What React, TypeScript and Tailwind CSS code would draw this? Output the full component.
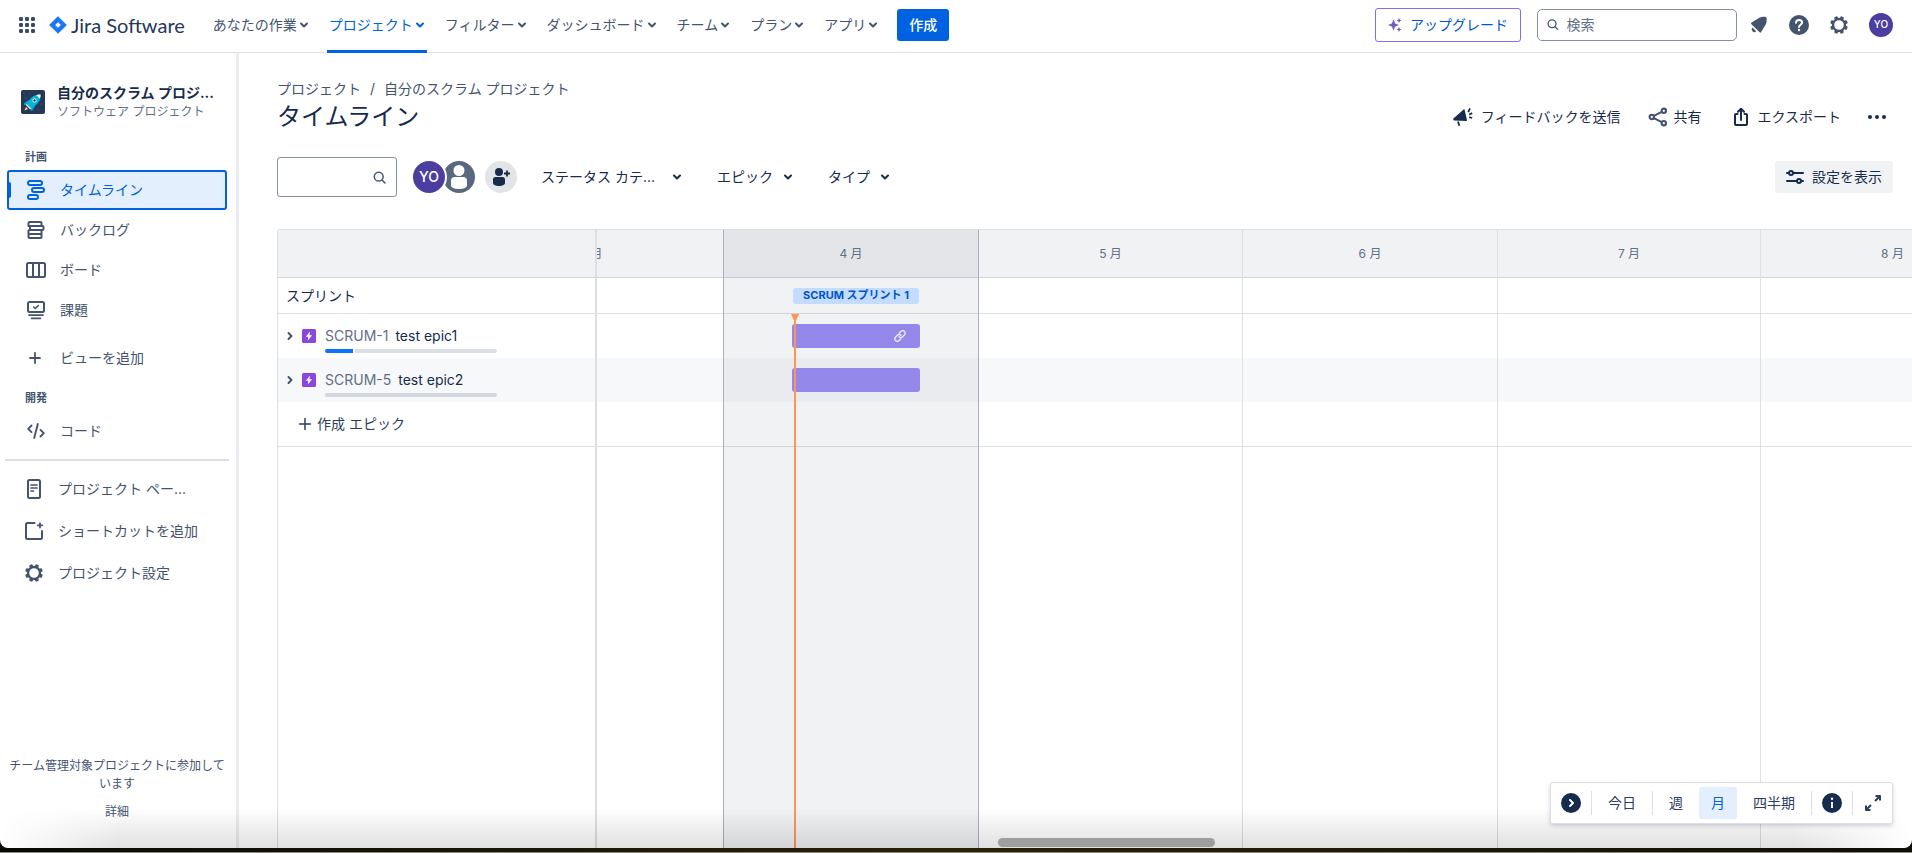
import type { ReactNode } from "react";

type IconProps = { className?: string };

function Chevron({ className = "" }: IconProps) {
  return (
    <svg className={className} width="10" height="10" viewBox="0 0 10 10" fill="none" stroke="currentColor" strokeWidth="2" strokeLinecap="round" strokeLinejoin="round" aria-hidden="true">
      <path d="M2 3.500 5 6.500 8 3.500" />
    </svg>
  );
}

function GridIcon() {
  return (
    <svg width="16" height="16" viewBox="0 0 16 16" fill="currentColor" aria-hidden="true">
      {[0, 6, 12].map((y) => [0, 6, 12].map((x) => <rect key={`${x}-${y}`} x={x} y={y} width="4" height="4" rx="1.300" />))}
    </svg>
  );
}

function JiraMark() {
  return (
    <svg width="18" height="18" viewBox="0 0 18 18" aria-hidden="true">
      <path d="M9 .3 17.400 8.400a.8.8 0 0 1 0 1.200L9 17.700.6 9.600a.8.8 0 0 1 0-1.200z" fill="#1D7AFC" />
      <path d="M9 .3v5.900L6.300 9H.4z" fill="#0C66E4" opacity=".2" />
      <path d="M9 17.700v-5.900L11.700 9h5.900z" fill="#0C66E4" opacity=".2" />
      <path d="M9 6.200 11.800 9 9 11.800 6.200 9z" fill="#fff" />
    </svg>
  );
}

function SearchIcon({ className = "" }: IconProps) {
  return (
    <svg className={className} width="13" height="13" viewBox="0 0 13 13" fill="none" stroke="currentColor" strokeWidth="1.500" strokeLinecap="round" aria-hidden="true">
      <circle cx="5.700" cy="5.700" r="4.400" />
      <path d="m9 9 3 3" />
    </svg>
  );
}

function SparkleIcon() {
  return (
    <svg width="14" height="14" viewBox="0 0 14 14" fill="currentColor" aria-hidden="true">
      <path d="M5.500 1.500 7.100 5.400 11 7 7.100 8.600 5.500 12.500 3.900 8.600 0 7l3.900-1.600z" />
      <path d="M11 0l.8 1.700 1.700.8-1.700.8L11 5l-.8-1.700-1.700-.8 1.700-.8zM11 9l.8 1.700 1.700.8-1.700.8L11 14l-.8-1.700-1.700-.8 1.700-.8z" />
    </svg>
  );
}

function BellIcon() {
  return (
    <svg width="18" height="18" viewBox="0 0 18 18" fill="currentColor" aria-hidden="true">
      <path d="M9.400 1.700c2-1 4.900-1 6.300-.6.600.2.800.5.900 1 .3 1.800.1 4.500-1 6.600l-4.500 7.400c-.4.700-1 .7-1.500.2L1.400 8.200c-.6-.6-.5-1.200.2-1.600z" />
      <path d="M2.500 11.600a2.600 2.600 0 0 0 3.700 3.700z" />
    </svg>
  );
}

function HelpIcon() {
  return (
    <svg width="20" height="20" viewBox="0 0 20 20" aria-hidden="true">
      <circle cx="10" cy="10" r="10" fill="currentColor" />
      <path d="M7 7.800C7 6 8.200 4.900 10 4.900s3.100 1.100 3.100 2.700c0 2-3.100 2.200-3.100 4.400" fill="none" stroke="#fff" strokeWidth="2" strokeLinecap="round" />
      <circle cx="10" cy="15" r="1.200" fill="#fff" />
    </svg>
  );
}

function GearIcon() {
  return (
    <svg width="18" height="18" viewBox="0 0 18 18" aria-hidden="true">
      <circle cx="9" cy="9" r="6" fill="none" stroke="currentColor" strokeWidth="2.400" />
      {[22.5, 67.5, 112.5, 157.5, 202.5, 247.5, 292.5, 337.5].map((a) => (
        <rect key={a} x="7.200" y="0.100" width="3.600" height="3" rx="1" fill="currentColor" transform={`rotate(${a} 9 9)`} />
      ))}
    </svg>
  );
}

function MegaphoneIcon() {
  return (
    <svg width="20" height="20" viewBox="0 0 20 20" aria-hidden="true">
      <path d="M11.600 2.800 14 13.200c.1.400-.2.700-.6.700L1.600 13.600c-1.300 0-1.900-1.500-.9-2.400L10.600 2.600c.4-.4.900-.3 1 .2z" fill="currentColor" />
      <path d="M5 14.500 6.300 18.800M15.200 5.200 17 1.300M16.200 7.600l3-1.600M16.200 10.200l3 .8" fill="none" stroke="currentColor" strokeWidth="1.800" />
    </svg>
  );
}

function ShareIcon() {
  return (
    <svg width="20" height="20" viewBox="0 0 20 20" fill="none" stroke="currentColor" strokeWidth="2.100" aria-hidden="true">
      <circle cx="3.800" cy="10" r="2.200" />
      <circle cx="15.800" cy="3.800" r="2.200" />
      <circle cx="15.800" cy="16.200" r="2.200" />
      <path d="m5.900 8.900 7.800-4M5.900 11.100l7.800 4" />
    </svg>
  );
}

function ExportIcon() {
  return (
    <svg width="16" height="20" viewBox="0 0 16 20" fill="none" stroke="currentColor" strokeWidth="2" strokeLinecap="round" strokeLinejoin="round" aria-hidden="true">
      <path d="M4.500 7H3a1 1 0 0 0-1 1v9a1 1 0 0 0 1 1h10a1 1 0 0 0 1-1V8a1 1 0 0 0-1-1h-1.500" />
      <path d="M8 13V2.200M5 4.800l3-3 3 3" />
    </svg>
  );
}

function SlidersIcon() {
  return (
    <svg width="18" height="14" viewBox="0 0 18 14" fill="none" stroke="currentColor" strokeWidth="2" strokeLinecap="round" aria-hidden="true">
      <path d="M1 3h2M7.500 3H17M1 11h9.500M15.500 11H17" />
      <circle cx="5" cy="3" r="2" />
      <circle cx="13" cy="11" r="2" />
    </svg>
  );
}

function TimelineIcon() {
  return (
    <svg width="20" height="20" viewBox="0 0 20 20" fill="none" stroke="currentColor" strokeWidth="2" aria-hidden="true">
      <rect x="2" y="1" width="14" height="4" rx="2" />
      <rect x="6" y="8" width="12" height="4" rx="2" />
      <rect x="2" y="15" width="10" height="4" rx="2" />
    </svg>
  );
}

function BacklogIcon() {
  return (
    <svg width="20" height="20" viewBox="0 0 20 20" fill="none" stroke="currentColor" strokeWidth="2" strokeLinejoin="round" aria-hidden="true">
      <path d="M3.500 2h11a1 1 0 0 1 1 1v3h-13V3a1 1 0 0 1 1-1z" />
      <path d="M4 6h12.500a1 1 0 0 1 1 1v2a1 1 0 0 1-1 1H4" />
      <path d="M2.500 10h13M2.500 14h13M2.500 10v7a1 1 0 0 0 1 1h11a1 1 0 0 0 1-1v-7M4 6v4" />
    </svg>
  );
}

function BoardIcon() {
  return (
    <svg width="20" height="20" viewBox="0 0 20 20" fill="none" stroke="currentColor" strokeWidth="2" aria-hidden="true">
      <rect x="1" y="3" width="18" height="14" rx="1.500" />
      <path d="M7 3v14M13 3v14" />
    </svg>
  );
}

function IssuesIcon() {
  return (
    <svg width="20" height="20" viewBox="0 0 20 20" fill="none" stroke="currentColor" strokeWidth="2" strokeLinecap="round" strokeLinejoin="round" aria-hidden="true">
      <rect x="2" y="2" width="16" height="10" rx="1.500" />
      <path d="m7.600 7 1.700 1.500 3-3" strokeWidth="1.600" />
      <path d="M3 15.200h14M5.500 18.300h9" strokeWidth="1.700" />
    </svg>
  );
}

function PlusIcon() {
  return (
    <svg width="20" height="20" viewBox="0 0 20 20" fill="none" stroke="currentColor" strokeWidth="1.800" strokeLinecap="round" aria-hidden="true">
      <path d="M9 5v10M4 10h10" />
    </svg>
  );
}

function CodeIcon() {
  return (
    <svg width="20" height="20" viewBox="0 0 20 20" fill="none" stroke="currentColor" strokeWidth="1.900" strokeLinecap="round" strokeLinejoin="round" aria-hidden="true">
      <path d="M5.500 4.500 2.200 7.800l3.300 3.300M11.800 3 8.200 17M14.500 8.900l3.300 3.300-3.300 3.300" />
    </svg>
  );
}

function PageIcon() {
  return (
    <svg width="20" height="20" viewBox="0 0 20 20" fill="none" stroke="currentColor" strokeWidth="2" strokeLinecap="round" aria-hidden="true">
      <rect x="4" y="1" width="12" height="18" rx="1.500" />
      <path d="M7 6h6M7 9h6M7 12h2.500" strokeWidth="1.700" />
    </svg>
  );
}

function ShortcutIcon() {
  return (
    <svg width="20" height="20" viewBox="0 0 20 20" fill="none" stroke="currentColor" strokeWidth="2" strokeLinecap="round" aria-hidden="true">
      <path d="M10.500 2H3.500A1.500 1.500 0 0 0 2 3.500v13A1.500 1.500 0 0 0 3.500 18h13a1.500 1.500 0 0 0 1.500-1.500v-6.500" />
      <path d="M16 2v4.600M13.700 4.300h4.600" strokeWidth="1.700" />
    </svg>
  );
}

function RocketAvatar() {
  return (
    <svg className="shrink-0" width="24" height="24" viewBox="0 0 24 24" aria-hidden="true">
      <rect width="24" height="24" rx="2" fill="#253858" />
      <g fill="#42526E">
        <circle cx="4" cy="8" r=".8" />
        <circle cx="9" cy="4" r=".8" />
        <circle cx="20" cy="14" r=".8" />
        <circle cx="17" cy="20" r=".8" />
        <circle cx="3" cy="3.500" r=".8" />
      </g>
      <path d="M8.500 9.500 3.200 13l-.5 2.300 3.500-.5zM14.500 15.500 12 20l-2.200 1.300.2-3.800z" fill="#00A3BF" />
      <path d="M19.500 4.500c.3 3.500-1 7-3.500 9.500l-5.500 4.500-4.800-4.800L10 8c2.500-2.600 6-3.900 9.500-3.500z" fill="#00B8D9" />
      <path d="M19.500 4.500c.1 1.500-.1 3-.6 4.200l-3.600-3.600c1.200-.5 2.700-.7 4.200-.6z" fill="#fff" />
      <path d="m5.700 13.700 4.800 4.800-1.400.9-4.300-4.300z" fill="#DFE1E6" />
      <path d="m5 17-1.500 3.500L7 19z" fill="#FFE380" />
      <circle cx="13.500" cy="10.500" r="1.700" fill="#253858" stroke="#fff" strokeWidth="1" />
    </svg>
  );
}

function EpicIcon() {
  return (
    <svg width="14" height="14" viewBox="0 0 14 14" aria-hidden="true">
      <rect width="14" height="14" rx="1.500" fill="#8B46DB" />
      <path d="M8 2.600 3.800 7.700h2.500l-.5 3.700 4.300-5.100H7.500z" fill="#fff" />
    </svg>
  );
}

const navItems = ["あなたの作業", "プロジェクト", "フィルター", "ダッシュボード", "チーム", "プラン", "アプリ"];

function Header() {
  return (
    <header className="flex h-[53px] shrink-0 items-center border-b border-[#DCDFE4] bg-white pr-[19px] pl-[19px] text-[#44546F]">
      <button aria-label="アプリスイッチャー" className="mb-[3px] text-[#3B4A66]"><GridIcon /></button>
      <a href="#" className="mb-[3px] ml-[14px] flex items-center gap-1 text-[#253858]">
        <JiraMark />
        <span className="font-['Lato','Inter',sans-serif] text-xl leading-6 whitespace-nowrap">Jira Software</span>
      </a>
      <nav className="ml-[18px] flex h-[53px] items-stretch" aria-label="メイン">
        {navItems.map((label, i) => (
          <button
            key={label}
            className={
              i === 1
                ? "mx-2 flex items-center gap-[2px] border-b-3 border-[#0062E0] px-[2px] whitespace-nowrap text-[#0062E0]"
                : "mx-2 flex items-center gap-[2px] px-[2px] pb-[3px] whitespace-nowrap"
            }
          >
            {label}
            <Chevron />
          </button>
        ))}
      </nav>
      <button className="mb-[3px] ml-[9px] h-8 rounded-[3px] bg-[#0062E0] px-3 font-medium whitespace-nowrap text-white">作成</button>
      <div className="mb-[3px] ml-auto flex items-center">
        <button className="flex h-[34px] items-center gap-2 rounded-[3px] border border-[#8270DB] px-3 whitespace-nowrap text-[#0055CC]">
          <span className="text-[#6E5DC6]"><SparkleIcon /></span>
          アップグレード
        </button>
        <label className="ml-4 flex h-8 w-[200px] items-center gap-2 rounded-[5px] border border-[#8590A2] px-[9px]">
          <SearchIcon />
          <input aria-label="検索" placeholder="検索" className="w-full min-w-0 bg-transparent outline-none placeholder:text-[#626F86]" />
        </label>
        <button aria-label="通知" className="ml-[13px]"><BellIcon /></button>
        <button aria-label="ヘルプ" className="ml-[21px]"><HelpIcon /></button>
        <button aria-label="設定" className="ml-[21px]"><GearIcon /></button>
        <button aria-label="プロフィール" className="ml-[21px] flex size-6 items-center justify-center rounded-full bg-[#4B3EA0] text-[10px] font-medium text-white">YO</button>
      </div>
    </header>
  );
}

function SideLink({ icon, label, tall = false }: { icon: ReactNode; label: string; tall?: boolean }) {
  return (
    <a href="#" className={tall ? "flex h-[42px] items-center gap-[14px] pl-[17px]" : "flex h-10 items-center gap-[14px] pl-[19px]"}>
      <span className="flex size-5 shrink-0 items-center justify-center">{icon}</span>
      <span className="truncate">{label}</span>
    </a>
  );
}

function Sidebar() {
  return (
    <aside className="flex w-[239px] shrink-0 flex-col border-r-3 border-[#EBECF0] pr-[9px] pl-[7px] text-[#44546F]">
      <div className="mt-[30px] flex items-center gap-3 pl-[14px]">
        <RocketAvatar />
        <div className="min-w-0">
          <div className="text-sm leading-5 font-bold whitespace-nowrap text-[#172B4D]">自分のスクラム プロジ...</div>
          <div className="text-xs leading-[18px] whitespace-nowrap text-[#626F86]">ソフトウェア プロジェクト</div>
        </div>
      </div>
      <h2 className="mt-7 pl-[18px] text-[11px] leading-4 font-bold">計画</h2>
      <nav className="mt-[5px]" aria-label="計画">
        <a href="#" aria-current="page" className="flex h-10 items-center rounded-[3px] border-2 border-[#0062E0] bg-[#E4EFFD] text-[#0062E0]">
          <span className="h-4 w-[2px] rounded-r-sm bg-[#0062E0]" />
          <span className="ml-[15px] flex size-5 items-center justify-center"><TimelineIcon /></span>
          <span className="ml-[14px]">タイムライン</span>
        </a>
        <SideLink icon={<BacklogIcon />} label="バックログ" />
        <SideLink icon={<BoardIcon />} label="ボード" />
        <SideLink icon={<IssuesIcon />} label="課題" />
        <div className="mt-2"><SideLink icon={<PlusIcon />} label="ビューを追加" /></div>
      </nav>
      <h2 className="mt-3 pl-[18px] text-[11px] leading-4 font-bold">開発</h2>
      <nav className="mt-[5px]" aria-label="開発"><SideLink icon={<CodeIcon />} label="コード" /></nav>
      <hr className="mt-2 -mr-[2px] -ml-[2px] border-t-2 border-[#DCDFE4]" />
      <nav className="mt-[7px]" aria-label="プロジェクト">
        <SideLink tall icon={<PageIcon />} label="プロジェクト ペー..." />
        <SideLink tall icon={<ShortcutIcon />} label="ショートカットを追加" />
        <SideLink tall icon={<GearIcon />} label="プロジェクト設定" />
      </nav>
      <div className="mt-auto pb-[27px] text-center text-xs leading-[18px]">
        <p>チーム管理対象プロジェクトに参加しています</p>
        <a href="#" className="mt-2.5 block">詳細</a>
      </div>
    </aside>
  );
}

function Toolbar() {
  return (
    <div className="mt-6 mr-[19px] flex items-center text-[#172B4D]">
      <label className="flex h-10 w-[120px] items-center rounded-[3px] border border-[#8590A2] px-[10px] text-[#44546F]">
        <input aria-label="タイムラインを検索" className="w-full min-w-0 bg-transparent outline-none" />
        <SearchIcon className="shrink-0" />
      </label>
      <div className="ml-[14px] flex">
        <span className="z-10 flex size-9 items-center justify-center rounded-full border-2 border-white bg-[#4B3EA0] text-sm font-medium text-white">YO</span>
        <svg className="mt-[2px] -ml-1" width="32" height="32" viewBox="0 0 32 32" role="img" aria-label="未割り当て">
          <circle cx="16" cy="16" r="16" fill="#596780" />
          <circle cx="16" cy="9.500" r="5.500" fill="#fff" />
          <path d="M8 20a4 4 0 0 1 4-4h8a4 4 0 0 1 4 4v4.500c0 2-3.500 3.500-8 3.500s-8-1.500-8-3.500z" fill="#fff" />
        </svg>
      </div>
      <button aria-label="ユーザーを追加" className="ml-[10px] flex size-8 items-center justify-center rounded-full bg-[#E3E4E8]">
        <svg width="18" height="18" viewBox="0 0 18 18" fill="currentColor" aria-hidden="true">
          <circle cx="7" cy="4" r="4" />
          <path d="M1 11.500A2.500 2.500 0 0 1 3.500 9h7a2.500 2.500 0 0 1 2.500 2.500V15c0 1.600-2.500 3-6 3s-6-1.400-6-3z" />
          <path d="M15 2.500v6M12 5.500h6" stroke="currentColor" strokeWidth="1.800" />
        </svg>
      </button>
      <button className="ml-6 flex items-center gap-[17px] whitespace-nowrap">ステータス カテ...<Chevron /></button>
      <button className="ml-[35px] flex items-center gap-[10px] whitespace-nowrap">エピック<Chevron /></button>
      <button className="ml-[35px] flex items-center gap-[10px] whitespace-nowrap">タイプ<Chevron /></button>
      <button className="ml-auto flex h-8 items-center gap-2 rounded-[3px] bg-[#F1F2F4] px-[11px] whitespace-nowrap"><SlidersIcon />設定を表示</button>
    </div>
  );
}

const months = [
  { label: "3 月", column: "-ml-[138px] w-[264px]" },
  { label: "4 月", column: "w-[255px] border-l border-[#A9B1BD] bg-[#091E42]/6" },
  { label: "5 月", column: "w-[264px] border-l border-[#A9B1BD]" },
  { label: "6 月", column: "w-[255px] border-l border-[#DCDFE4]" },
  { label: "7 月", column: "w-[263px] border-l border-[#DCDFE4]" },
  { label: "8 月", column: "w-[264px] border-l border-[#DCDFE4]" },
];

function EpicRow({ id, name, done, striped = false }: { id: string; name: string; done: boolean; striped?: boolean }) {
  return (
    <div className={striped ? "flex h-11 bg-[#F7F8F9] pt-3 pl-[7px]" : "flex h-11 pt-3 pl-[7px]"}>
      <button aria-label={`${id} を展開`} className="flex h-5 items-center text-[#44546F]"><Chevron className="-rotate-90" /></button>
      <span className="ml-[7px] flex h-5 items-center"><EpicIcon /></span>
      <div className="ml-[9px] w-[172px]">
        <div className="flex gap-[7px] leading-5 whitespace-nowrap">
          <a href="#" className="text-[#626F86]">{id}</a>
          <span className="text-[#172B4D]">{name}</span>
        </div>
        <div className="mt-[3px] flex h-1 gap-[2px]">
          {done && <span className="w-7 rounded-l-full bg-[#0C74FC]" />}
          <span className={done ? "flex-1 rounded-r-full bg-[#DCDFE4]" : "flex-1 rounded-full bg-[#D3D6DC]"} />
        </div>
      </div>
    </div>
  );
}

function Timeline() {
  return (
    <section className="mt-8 flex min-h-0 flex-1 rounded-tl-[3px] border-t border-l border-[#DCDFE4]" aria-label="タイムライン">
      <div className="w-[319px] shrink-0 border-r-2 border-[#DCDFE4]">
        <div className="h-12 border-b border-[#D0D4DB] bg-[#F1F2F4]" />
        <div className="flex h-9 items-center border-b border-[#DCDFE4] pl-2 text-[#172B4D]">スプリント</div>
        <EpicRow id="SCRUM-1" name="test epic1" done />
        <EpicRow id="SCRUM-5" name="test epic2" done={false} striped />
        <button className="flex h-[45px] w-full items-center gap-1 border-b border-[#DCDFE4] pl-[19px] text-[#2C3E5D]">
          <svg width="16" height="16" viewBox="0 0 16 16" fill="none" stroke="currentColor" strokeWidth="1.500" strokeLinecap="round" aria-hidden="true">
            <path d="M8 2.500v11M2.500 8h11" />
          </svg>
          作成 エピック
        </button>
      </div>
      <div className="relative min-w-0 flex-1 overflow-hidden">
        <div className="h-12 border-b border-[#D0D4DB] bg-[#F1F2F4]" />
        <div className="h-9 border-b border-[#DCDFE4]" />
        <div className="h-11" />
        <div className="h-11 bg-[#F7F8F9]" />
        <div className="h-[45px] border-b border-[#DCDFE4]" />
        <div className="absolute inset-0 flex">
          {months.map((m) => (
            <div key={m.label} className={`shrink-0 text-center text-xs leading-[47px] text-[#626F86] ${m.column}`}>{m.label}</div>
          ))}
        </div>
        <span className="absolute top-[58px] left-[196px] flex h-4 w-[126px] items-center justify-center rounded-[3px] bg-[#C4DCFE] text-[11px] font-bold whitespace-nowrap text-[#0055CC]">SCRUM スプリント 1</span>
        <div className="absolute top-[94px] left-[195px] flex h-6 w-32 items-center justify-end rounded-[3px] bg-[#9487EA] pr-[14px] text-white/80">
          <svg width="12" height="12" viewBox="0 0 12 12" fill="none" stroke="currentColor" strokeWidth="1.400" strokeLinecap="round" aria-hidden="true">
            <path d="M5.100 3.300 6.900 1.500a2.400 2.400 0 0 1 3.500 3.500L8.600 6.800a2.400 2.400 0 0 1-3.500 0" />
            <path d="M6.900 8.700 5.100 10.500A2.400 2.400 0 0 1 1.600 7l1.800-1.800a2.400 2.400 0 0 1 3.500 0" />
          </svg>
        </div>
        <div className="absolute top-[138px] left-[195px] h-6 w-32 rounded-[3px] bg-[#9487EA]" />
        <div className="absolute top-[84px] bottom-0 left-[197px] w-[2px] bg-[#FF9555]" />
        <svg className="absolute top-[84px] left-[194px] text-[#FF9555]" width="8" height="7" viewBox="0 0 8 7" fill="currentColor" aria-hidden="true">
          <path d="M0 0h8L5 6.500H3z" />
        </svg>
      </div>
    </section>
  );
}

function Divider() {
  return <span className="h-6 w-px bg-[#DCDFE4]" />;
}

function ZoomBar() {
  return (
    <div className="absolute right-[19px] bottom-6 flex h-[42px] items-center rounded-[3px] border border-[#DCDFE4] bg-white px-[10px] whitespace-nowrap text-[#2C3E5D] shadow-[0_2px_4px_rgba(9,30,66,0.18)]">
      <button aria-label="次へ" className="text-[#172B4D]">
        <svg width="20" height="20" viewBox="0 0 20 20" aria-hidden="true">
          <circle cx="10" cy="10" r="10" fill="currentColor" />
          <path d="m9 7 3 3-3 3" fill="none" stroke="#fff" strokeWidth="2" strokeLinecap="round" strokeLinejoin="round" />
        </svg>
      </button>
      <span className="w-[10px]" />
      <Divider />
      <button className="px-4">今日</button>
      <Divider />
      <button className="px-4">週</button>
      <button aria-pressed="true" className="h-8 rounded-[3px] bg-[#E4EFFD] px-3 text-[#0062E0]">月</button>
      <button className="px-4">四半期</button>
      <Divider />
      <button aria-label="凡例" className="mx-[10px] text-[#172B4D]">
        <svg width="20" height="20" viewBox="0 0 20 20" aria-hidden="true">
          <circle cx="10" cy="10" r="10" fill="currentColor" />
          <circle cx="10" cy="5.700" r="1.200" fill="#fff" />
          <path d="M10 9v6" stroke="#fff" strokeWidth="2" />
        </svg>
      </button>
      <Divider />
      <button aria-label="全画面" className="ml-[11px]">
        <svg width="18" height="18" viewBox="0 0 18 18" fill="none" stroke="currentColor" strokeWidth="2" strokeLinejoin="round" aria-hidden="true">
          <path d="M11.500 2H16v4.500M16 2l-5 5M2 11.500V16h4.500M2 16l5-5" />
        </svg>
      </button>
    </div>
  );
}

export default function App() {
  return (
    <div className="flex h-screen flex-col overflow-hidden bg-[#0B0D04] font-['Inter','Noto_Sans_CJK_JP',sans-serif] text-sm">
      <div className="relative flex min-h-0 flex-1 flex-col overflow-hidden rounded-b-[8px] bg-white">
        <Header />
        <div className="flex min-h-0 flex-1">
          <Sidebar />
          <main className="flex min-w-0 flex-1 flex-col pt-6 pl-[38px]">
            <nav className="flex h-6 items-center gap-[9px] text-[#44546F]" aria-label="パンくず">
              <a href="#">プロジェクト</a>
              <span>/</span>
              <a href="#">自分のスクラム プロジェクト</a>
            </nav>
            <div className="mr-[19px] flex h-8 items-center justify-between text-[#172B4D]">
              <h1 className="text-2xl leading-8">タイムライン</h1>
              <div className="flex items-center whitespace-nowrap">
                <button className="flex items-center gap-2"><MegaphoneIcon />フィードバックを送信</button>
                <button className="ml-7 flex items-center gap-[5px]"><span className="text-[#44546F]"><ShareIcon /></span>共有</button>
                <button className="ml-8 flex items-center gap-2"><ExportIcon />エクスポート</button>
                <button aria-label="その他" className="mr-[6px] ml-[26px]">
                  <svg width="20" height="6" viewBox="0 0 20 6" fill="currentColor" aria-hidden="true">
                    <circle cx="3" cy="3" r="2" />
                    <circle cx="10" cy="3" r="2" />
                    <circle cx="17" cy="3" r="2" />
                  </svg>
                </button>
              </div>
            </div>
            <Toolbar />
            <Timeline />
          </main>
        </div>
        <div className="pointer-events-none absolute inset-x-0 bottom-0 h-10 bg-linear-to-t from-black/12 to-transparent mask-[linear-gradient(to_right,transparent,black_120px,black_calc(100%-120px),transparent)]" />
        <ZoomBar />
        <div className="absolute bottom-px left-[998px] h-[9px] w-[217px] rounded-full bg-[#9E9E9E]" />
      </div>
      <div className="h-[5px] shrink-0 border-b border-[#8A877F] bg-linear-to-r from-[#070A04] via-[#2A2208] to-[#0E0F05]" />
    </div>
  );
}
